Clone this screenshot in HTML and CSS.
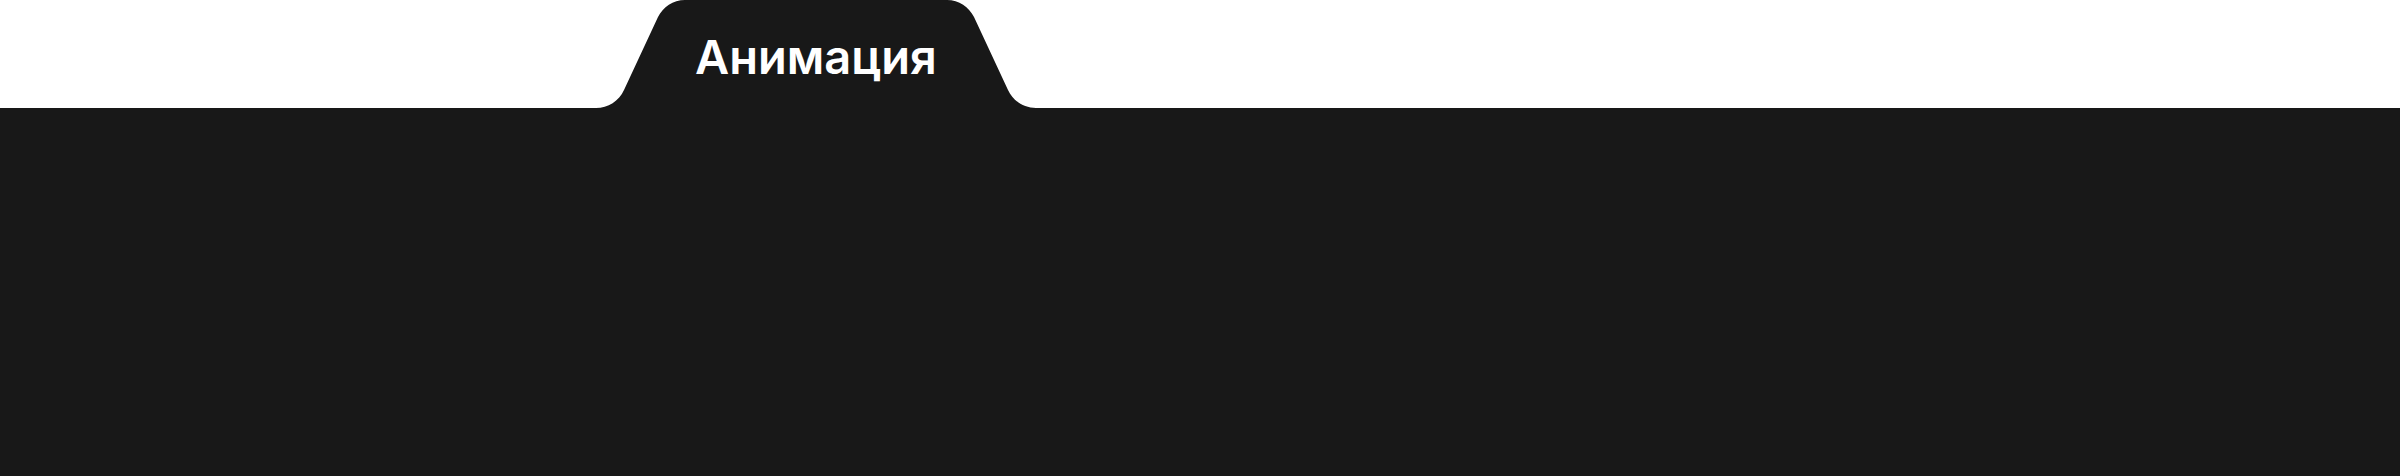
FILE: index.html
```html
<!DOCTYPE html>
<html lang="ru">
<head>
<meta charset="utf-8">
<title>Анимация</title>
<link rel="stylesheet" href="styles.css">
</head>
<body>
<section class="folder">
  <header class="tab">
    <svg class="tab-edge" viewBox="0 0 92 108" aria-hidden="true"><path d="M0 108C12 108 23 101 28 90L62 17C67 7 77 0 89 0H92V108Z"/></svg>
    <h1 class="tab-title">Анимация</h1>
    <svg class="tab-edge" viewBox="0 0 92 108" aria-hidden="true"><path d="M92 108C80 108 69 101 64 90L30 17C25 7 15 0 3 0H0V108Z"/></svg>
  </header>
  <div class="folder-body"></div>
</section>
</body>
</html>
```
FILE: styles.css
```css
body {
  margin: 0;
  background: #fff;
  font-family: Inter, "Noto Sans", sans-serif;
}

.folder {
  display: flex;
  flex-direction: column;
  min-height: 100vh;
}

.tab {
  display: flex;
  height: 108px;
  margin-left: 596px;
}

.tab-edge {
  flex: none;
  width: 92px;
  height: 108px;
  fill: #181818;
}

.tab-title {
  margin: 0;
  padding: 0 7px;
  background: #181818;
  color: #fff;
  font-size: 47px;
  font-weight: 600;
  line-height: 114px;
  height: 108px;
}

.folder-body {
  flex: 1;
  background: #181818;
}
```
